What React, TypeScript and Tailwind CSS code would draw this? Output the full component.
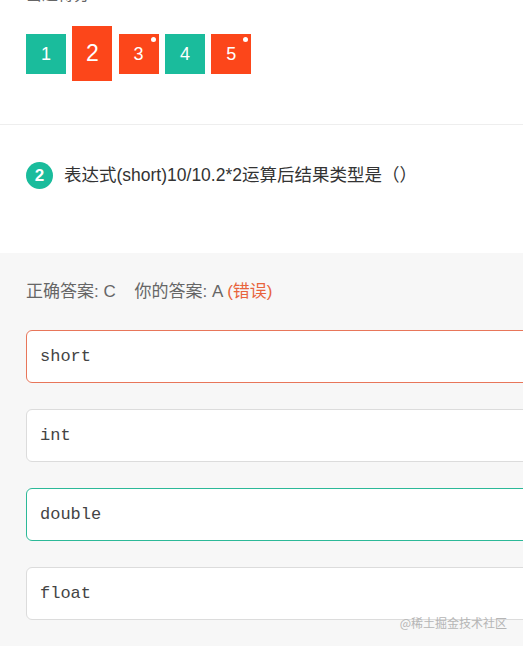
import React from "react";

const squares = [
  { n: "1", color: "bg-[#1abc9c]", current: false, dot: false },
  { n: "2", color: "bg-[#fc461a]", current: true, dot: false },
  { n: "3", color: "bg-[#fc461a]", current: false, dot: true },
  { n: "4", color: "bg-[#1abc9c]", current: false, dot: false },
  { n: "5", color: "bg-[#fc461a]", current: false, dot: true },
];

const options = [
  { t: "short", border: "border-[#e8765a]" },
  { t: "int", border: "border-[#dcdcdc]" },
  { t: "double", border: "border-[#2cb998]" },
  { t: "float", border: "border-[#dcdcdc]" },
];

export default function App() {
  return (
    <div
      className="relative w-[523px] h-[646px] overflow-hidden bg-white flex flex-col"
      style={{ fontFamily: '"Liberation Sans", "Noto Sans CJK SC", sans-serif' }}
    >
      <div className="h-[125px] shrink-0 border-b border-[#eeeeee] flex flex-col">
        <div className="-mt-[13px] ml-[26px] text-[16px] leading-[16px] text-[#666]">当题得分</div>
        <div className="mt-[23px] ml-[26px] flex items-start gap-[6.3px]">
          {squares.map((s) =>
            s.current ? (
              <div
                key={s.n}
                className={`${s.color} w-[40px] h-[55px] flex items-center justify-center text-white text-[23px]`}
              >
                {s.n}
              </div>
            ) : (
              <div
                key={s.n}
                className={`${s.color} relative mt-[8px] w-[40px] h-[40px] flex items-center justify-center text-white text-[18px]`}
              >
                {s.n}
                {s.dot && (
                  <span className="absolute top-[3px] right-[3px] w-[5px] h-[5px] rounded-full bg-white" />
                )}
              </div>
            )
          )}
        </div>
      </div>
      <div className="h-[128px] shrink-0 pt-[37px] pl-[26px]">
        <div className="flex items-center gap-[11px]">
          <div className="w-[27px] h-[27px] rounded-full bg-[#1abc9c] flex items-center justify-center text-white text-[17px] font-bold">
            2
          </div>
          <div className="text-[17.5px] text-[#333]">表达式(short)10/10.2*2运算后结果类型是（）</div>
        </div>
      </div>
      <div className="bg-[#f7f7f7] flex-1 pt-[27px] pl-[26px]">
        <div className="text-[17px] leading-[24px] text-[#666]">
          正确答案: C&nbsp;&nbsp;&nbsp;&nbsp;你的答案: A <span className="text-[#e8643c]">(错误)</span>
        </div>
        <div className="mt-[26px] flex flex-col gap-[26px]">
          {options.map((o) => (
            <div
              key={o.t}
              className={`w-[540px] h-[53px] rounded-[6px] border ${o.border} bg-white flex items-center pl-[13px] text-[17px] text-[#444]`}
              style={{ fontFamily: '"Liberation Mono", monospace' }}
            >
              {o.t}
            </div>
          ))}
        </div>
      </div>
      <div
        className="absolute right-[16px] top-[614px] text-[12px] text-[#b5b5b5]"
        style={{ fontFamily: '"Noto Sans CJK SC", sans-serif' }}
      >
        @稀土掘金技术社区
      </div>
    </div>
  );
}
